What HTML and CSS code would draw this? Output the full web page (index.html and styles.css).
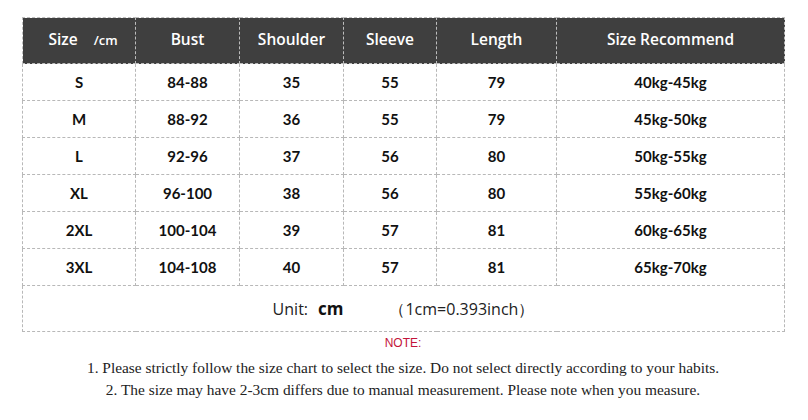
FILE: index.html
```html
<!DOCTYPE html>
<html>
<head>
<meta charset="utf-8">
<link rel="stylesheet" href="styles.css">
</head>
<body>
<div class="page">
  <table class="chart">
    <colgroup>
      <col class="c1"><col class="c2"><col class="c3"><col class="c4"><col class="c5"><col class="c6">
    </colgroup>
    <thead>
      <tr>
        <th><span class="size-label">Size</span><span class="unit-label">/cm</span></th>
        <th>Bust</th>
        <th>Shoulder</th>
        <th>Sleeve</th>
        <th>Length</th>
        <th>Size Recommend</th>
      </tr>
    </thead>
    <tbody>
      <tr><td>S</td><td>84-88</td><td>35</td><td>55</td><td>79</td><td>40kg-45kg</td></tr>
      <tr><td>M</td><td>88-92</td><td>36</td><td>55</td><td>79</td><td>45kg-50kg</td></tr>
      <tr><td>L</td><td>92-96</td><td>37</td><td>56</td><td>80</td><td>50kg-55kg</td></tr>
      <tr><td>XL</td><td>96-100</td><td>38</td><td>56</td><td>80</td><td>55kg-60kg</td></tr>
      <tr><td>2XL</td><td>100-104</td><td>39</td><td>57</td><td>81</td><td>60kg-65kg</td></tr>
      <tr><td>3XL</td><td>104-108</td><td>40</td><td>57</td><td>81</td><td>65kg-70kg</td></tr>
      <tr class="unit-row">
        <td colspan="6"><span class="unit-text">Unit:</span><span class="unit-cm">cm</span><span class="unit-conv">（1cm=0.393inch）</span></td>
      </tr>
    </tbody>
  </table>
  <div class="notes">
    <p class="note-title">NOTE:</p>
    <p class="note-line">1. Please strictly follow the size chart to select the size. Do not select directly according to your habits.</p>
    <p class="note-line">2. The size may have 2-3cm differs due to manual measurement. Please note when you measure.</p>
  </div>
</div>
</body>
</html>
```
FILE: styles.css
```css
html, body {
  margin: 0;
  padding: 0;
  background: #ffffff;
}
.page {
  width: 808px;
  height: 420px;
  padding: 17px 0 0 22px;
  box-sizing: border-box;
}
.chart {
  border-collapse: collapse;
  table-layout: fixed;
  width: 762px;
}
.c1 { width: 113px; }
.c2 { width: 104px; }
.c3 { width: 104px; }
.c4 { width: 93px; }
.c5 { width: 120px; }
.c6 { width: 228px; }
.chart th {
  background: #3f3f3f;
  color: #ffffff;
  font-family: "Open Sans", sans-serif;
  font-weight: 600;
  font-size: 15.5px;
  height: 46px;
  padding: 0 0 4px 0;
  text-align: center;
  border: 1px dashed #bdbdbd;
  box-sizing: border-box;
}
.size-label {
  margin-left: 8px;
  margin-right: 16px;
}
.unit-label {
  font-size: 13px;
}
.chart td {
  font-family: "Lato", sans-serif;
  font-weight: 700;
  font-size: 15px;
  color: #111111;
  height: 36px;
  padding: 0;
  text-align: center;
  border: 1px dashed #b8b8b8;
}
.unit-row td {
  height: 45px;
  font-weight: 400;
}
.unit-text {
  font-family: "Open Sans", sans-serif;
  font-size: 16px;
  color: #222;
  margin-right: 10px;
}
.unit-cm {
  font-family: "Open Sans", sans-serif;
  font-weight: 700;
  font-size: 17px;
  margin-right: 46px;
}
.unit-conv {
  font-family: "Open Sans", sans-serif;
  font-size: 16px;
  color: #222;
}
.notes {
  width: 762px;
  text-align: center;
  padding-top: 4px;
}
.notes p {
  margin: 0;
}
.note-title {
  font-family: "Liberation Sans", sans-serif;
  font-size: 12px;
  color: #c3143a;
  height: 21px;
  line-height: 14px;
}
.note-line {
  font-family: "Liberation Serif", serif;
  font-size: 15.4px;
  color: #222;
  line-height: 22px;
}
```
